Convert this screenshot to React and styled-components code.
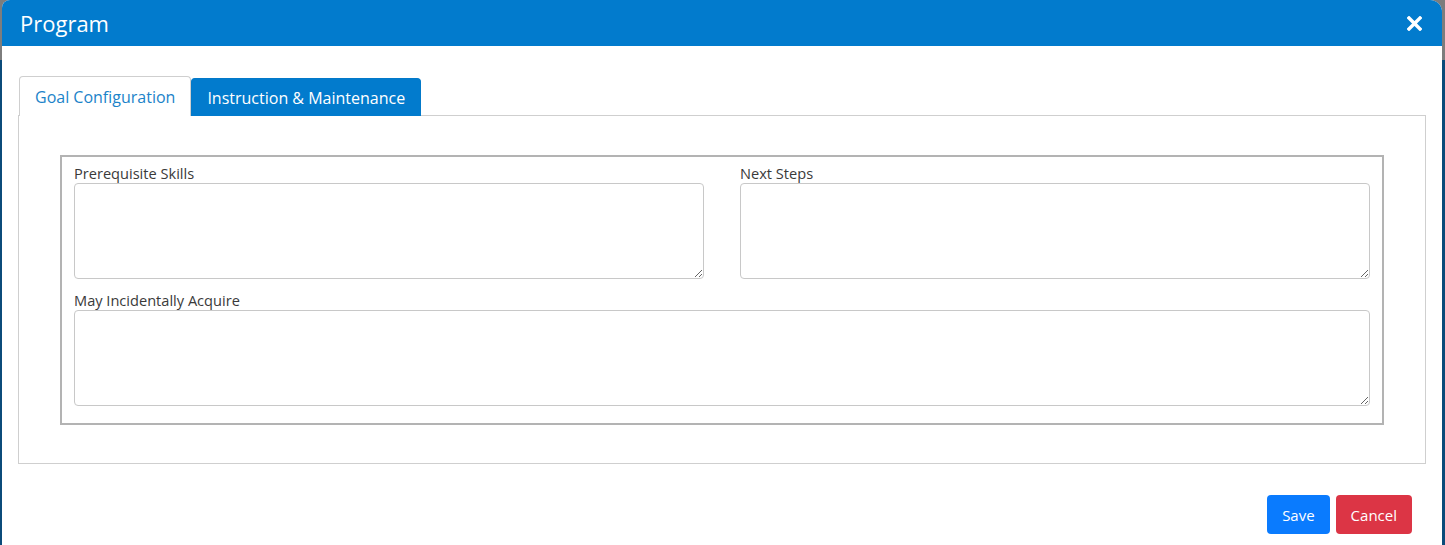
import React from 'react'
import styled, { createGlobalStyle } from 'styled-components'

const GlobalStyle = createGlobalStyle`
  html, body {
    margin: 0;
    padding: 0;
    background: #7d7d7d;
    font-family: "Open Sans", "Noto Sans", sans-serif;
  }
`

const Backdrop = styled.div`
  display: flex;
  height: 545px;
  padding: 0 3px 0 2px;
  background: linear-gradient(to bottom, #7d7d7d 0, #7d7d7d 60px, #0b4b7a 60px);
  overflow: hidden;
`

const Modal = styled.div`
  flex: 1;
  display: flex;
  flex-direction: column;
  background: #fff;
  border-radius: 8px 12px 0 0;
  overflow: hidden;
`

const Header = styled.div`
  display: flex;
  align-items: center;
  justify-content: space-between;
  height: 46px;
  padding: 0 20px 0 18px;
  background-color: #027bcd;
  color: #fff;
`

const Title = styled.h4`
  margin: 0;
  font-size: 22px;
  font-weight: 400;
`

const Close = styled.button`
  display: flex;
  padding: 0;
  border: none;
  background: none;
  cursor: pointer;
`

const Body = styled.div`
  padding: 30px 16px 0 16px;
`

const Tabs = styled.div`
  display: flex;
  align-items: flex-end;
  padding-left: 1px;
`

const Tab = styled.button`
  height: ${props => props.active ? '38px' : '40px'};
  padding: 0 15px;
  margin-bottom: -1px;
  border: 1px solid ${props => props.active ? '#0379c9' : '#cfcfcf'};
  border-bottom: none;
  border-radius: 4px 4px 0 0;
  background-color: ${props => props.active ? '#027bcd' : '#fff'};
  color: ${props => props.active ? '#fff' : '#1b83c9'};
  font-family: inherit;
  font-size: 16px;
  cursor: pointer;
`

const Panel = styled.div`
  border: 1px solid #cfcfcf;
  padding: 39px 41px 38px 41px;
`

const Fieldset = styled.div`
  border: 2px solid #b3b3b3;
  padding: 6px 12px 17px 12px;
  display: grid;
  grid-template-columns: 1fr 1fr;
  column-gap: 36px;
  row-gap: 11px;
`

const Field = styled.div`
  display: flex;
  flex-direction: column;
  grid-column: ${props => props.wide ? '1 / span 2' : 'auto'};
`

const Label = styled.label`
  font-size: 14.6px;
  line-height: 20px;
  color: #3a3a3a;
`

const TextArea = styled.textarea`
  height: 96px;
  box-sizing: border-box;
  border: 1px solid #c8c8c8;
  border-radius: 4px;
  padding: 6px 8px;
  font-family: inherit;
  font-size: 14px;
  outline: none;
`

const Footer = styled.div`
  display: flex;
  justify-content: flex-end;
  gap: 6px;
  padding: 31px 30px 0 0;
`

const Button = styled.button`
  height: 39px;
  padding: 0 15px;
  border: none;
  border-radius: 4px;
  background-color: ${props => props.color};
  color: #fff;
  font-family: inherit;
  font-size: 15px;
  cursor: pointer;
`

function CloseIcon() {
  return (
    <svg width="15" height="15" viewBox="0 0 15 15">
      <path d="M2 2 L13 13 M13 2 L2 13" stroke="#fff" strokeWidth="3.4" strokeLinecap="square" />
    </svg>
  )
}

function App() {
  return (
    <>
      <GlobalStyle />
      <Backdrop>
        <Modal>
          <Header>
            <Title>Program</Title>
            <Close><CloseIcon /></Close>
          </Header>
          <Body>
            <Tabs>
              <Tab>Goal Configuration</Tab>
              <Tab active>Instruction &amp; Maintenance</Tab>
            </Tabs>
            <Panel>
              <Fieldset>
                <Field>
                  <Label>Prerequisite Skills</Label>
                  <TextArea />
                </Field>
                <Field>
                  <Label>Next Steps</Label>
                  <TextArea />
                </Field>
                <Field wide>
                  <Label>May Incidentally Acquire</Label>
                  <TextArea />
                </Field>
              </Fieldset>
            </Panel>
          </Body>
          <Footer>
            <Button color="#0a7bfe">Save</Button>
            <Button color="#dc3545">Cancel</Button>
          </Footer>
        </Modal>
      </Backdrop>
    </>
  )
}

export default App
